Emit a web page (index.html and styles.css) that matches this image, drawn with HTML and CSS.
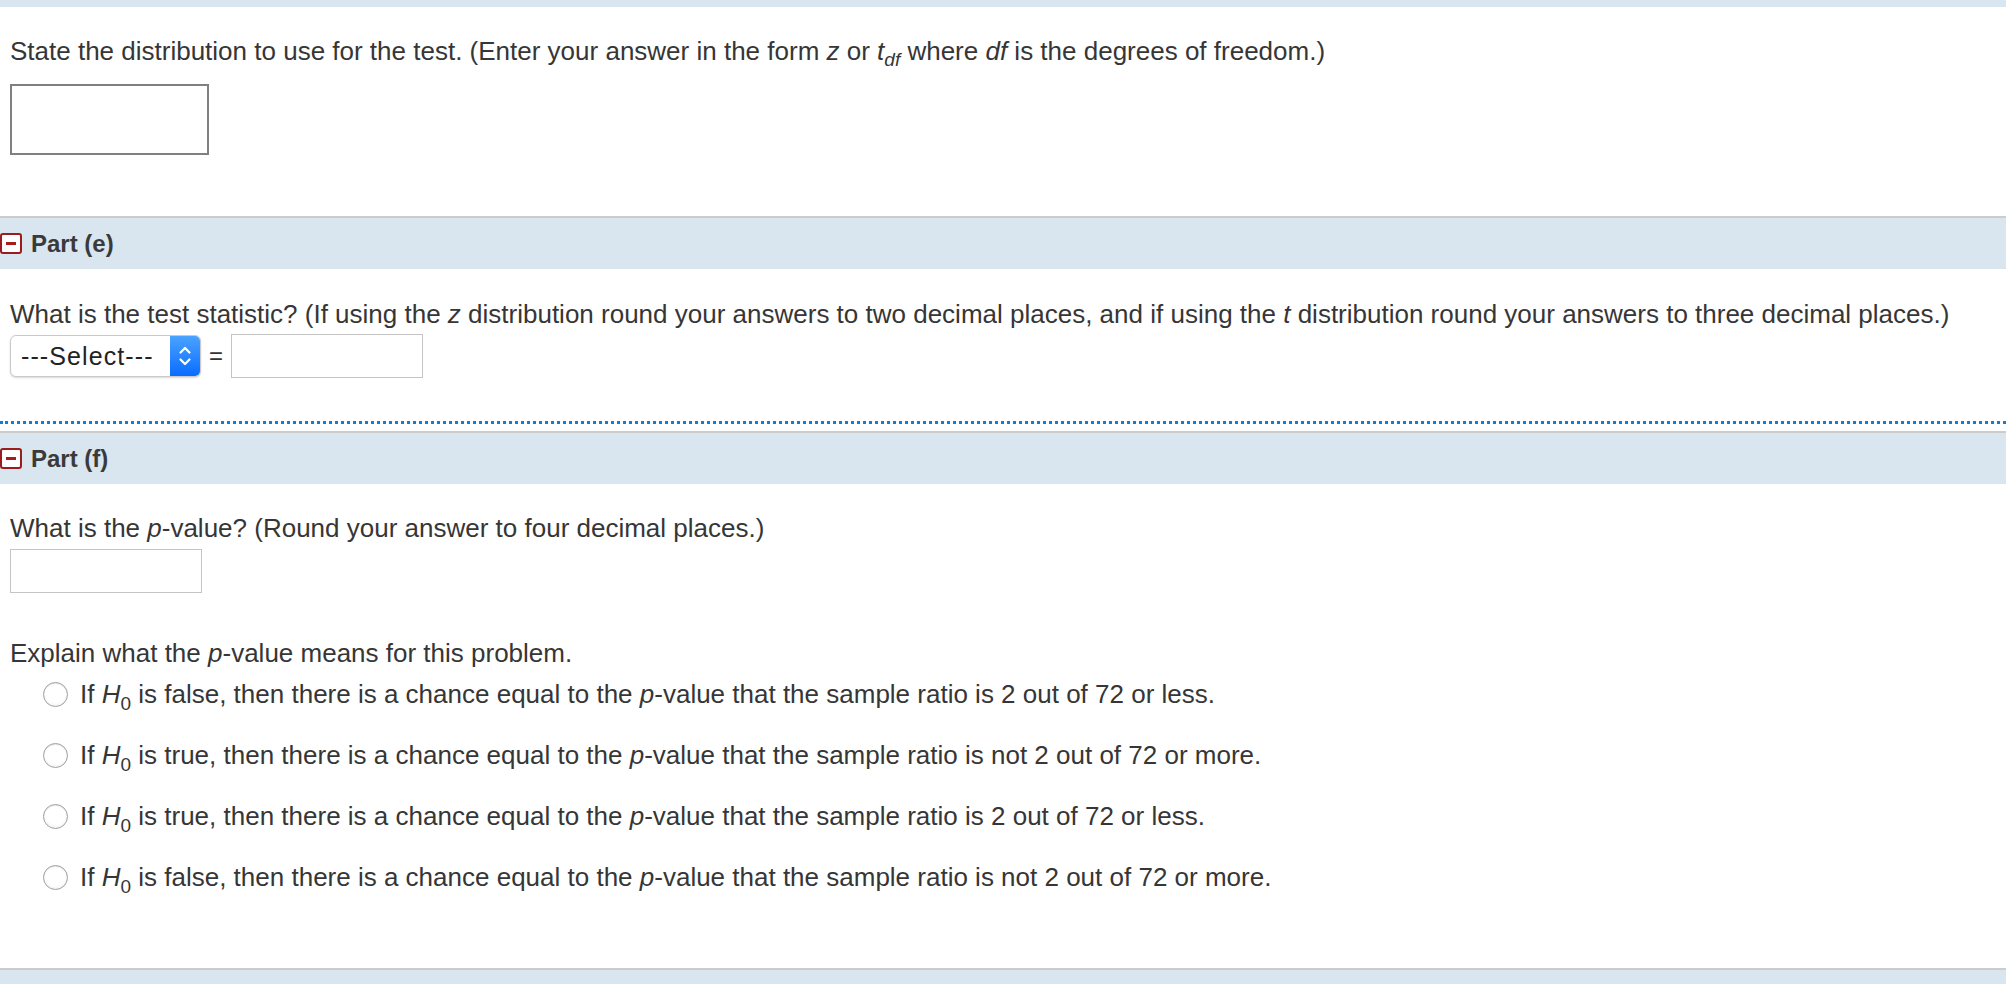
FILE: index.html
```html
<!DOCTYPE html>
<html>
<head>
<meta charset="utf-8">
<link rel="stylesheet" href="styles.css">
</head>
<body>
<div class="topband"></div>

<div class="block block-d">
  <p class="q q-first">State the distribution to use for the test. (Enter your answer in the form <i>z</i> or <i>t</i><sub><i>df</i></sub> where <i>df</i> is the degrees of freedom.)</p>
  <div class="box-big"></div>
</div>

<div class="part-head">
  <span class="toggle"><span class="bar"></span></span>
  <span class="part-title">Part (e)</span>
</div>

<div class="block block-e">
  <p class="q">What is the test statistic? (If using the <i>z</i> distribution round your answers to two decimal places, and if using the <i>t</i> distribution round your answers to three decimal places.)</p>
  <div class="stat-row">
    <div class="select">
      <span class="select-label">---Select---</span>
      <span class="select-btn">
        <svg width="16" height="28" viewBox="0 0 16 28"><path d="M3.5 10.5 L8 6 L12.5 10.5" fill="none" stroke="#fff" stroke-width="2.2" stroke-linecap="round" stroke-linejoin="round"/><path d="M3.5 17.5 L8 22 L12.5 17.5" fill="none" stroke="#fff" stroke-width="2.2" stroke-linecap="round" stroke-linejoin="round"/></svg>
      </span>
    </div>
    <span class="eq">=</span>
    <div class="box-small"></div>
  </div>
</div>
<div class="dotted"></div>

<div class="part-head">
  <span class="toggle"><span class="bar"></span></span>
  <span class="part-title">Part (f)</span>
</div>

<div class="block block-f">
  <p class="q">What is the <i>p</i>-value? (Round your answer to four decimal places.)</p>
  <div class="box-small box-f"></div>
  <p class="q q-explain">Explain what the <i>p</i>-value means for this problem.</p>
  <div class="options">
    <div class="opt"><span class="radio"></span><span>If <i>H</i><sub>0</sub> is false, then there is a chance equal to the <i>p</i>-value that the sample ratio is 2 out of 72 or less.</span></div>
    <div class="opt"><span class="radio"></span><span>If <i>H</i><sub>0</sub> is true, then there is a chance equal to the <i>p</i>-value that the sample ratio is not 2 out of 72 or more.</span></div>
    <div class="opt"><span class="radio"></span><span>If <i>H</i><sub>0</sub> is true, then there is a chance equal to the <i>p</i>-value that the sample ratio is 2 out of 72 or less.</span></div>
    <div class="opt"><span class="radio"></span><span>If <i>H</i><sub>0</sub> is false, then there is a chance equal to the <i>p</i>-value that the sample ratio is not 2 out of 72 or more.</span></div>
  </div>
</div>

<div class="bottom-head"></div>
</body>
</html>
```

FILE: styles.css
```css
html, body {
  margin: 0;
  padding: 0;
  background: #ffffff;
}
body {
  font-family: "Liberation Sans", Arial, Helvetica, sans-serif;
  font-size: 26px;
  color: #363636;
  width: 2006px;
  overflow: hidden;
}
.topband {
  height: 7px;
  background: #d9e5ef;
}
.block {
  padding-left: 10px;
}
.q {
  margin: 0;
  line-height: 28px;
  white-space: nowrap;
}
.q sub {
  font-size: 19px;
  line-height: 0;
  vertical-align: -6px;
}
.block-d {
  padding-top: 30px;
  padding-bottom: 61px;
}
.box-big {
  margin-top: 19px;
  width: 195px;
  height: 67px;
  border: 2px solid #808080;
  background: #fff;
}
.part-head {
  border-top: 2px solid #cccccc;
  background: #d9e5ef;
  height: 51px;
  display: flex;
  align-items: center;
  gap: 9px;
}
.toggle {
  width: 22px;
  height: 21px;
  box-sizing: border-box;
  border: 2px solid #9b1c1c;
  border-radius: 3px;
  background: #ffffff;
  display: flex;
  align-items: center;
  justify-content: center;
}
.toggle .bar {
  width: 10px;
  height: 3px;
  background: #a51d1d;
}
.part-title {
  font-weight: bold;
  font-size: 24px;
  color: #3a3a3a;
}
.block-e {
  padding-top: 31px;
  padding-bottom: 43px;
}
.stat-row {
  margin-top: 6px;
  display: flex;
  align-items: center;
}
.select {
  width: 191px;
  height: 42px;
  box-sizing: border-box;
  border: 1px solid #c9c9c9;
  border-radius: 6px;
  box-shadow: 0 1px 2px rgba(0,0,0,0.15);
  display: flex;
  align-items: stretch;
  overflow: hidden;
  background: #fff;
}
.select-label {
  flex: 1;
  padding-left: 10px;
  display: flex;
  align-items: center;
  font-size: 25px;
  letter-spacing: 1.1px;
  color: #222;
}
.select-btn {
  width: 30px;
  background: linear-gradient(#4aa3ff, #0a6cff);
  display: flex;
  align-items: center;
  justify-content: center;
}
.eq {
  width: 30px;
  text-align: center;
  font-size: 24px;
  color: #333;
}
.box-small {
  width: 190px;
  height: 42px;
  border: 1px solid #c4c4c4;
  background: #fff;
}
.dotted {
  border-top: 3px dotted #0a7fde;
  margin-bottom: 7px;
}
.block-f {
  padding-top: 30px;
  padding-bottom: 77px;
}
.box-f {
  margin-top: 7px;
}
.q-explain {
  margin-top: 46px;
}
.options {
  margin-top: 13px;
  display: flex;
  flex-direction: column;
  gap: 33px;
  padding-left: 33px;
}
.opt {
  display: flex;
  align-items: center;
  gap: 12px;
  line-height: 28px;
  white-space: nowrap;
}
.opt sub {
  font-size: 19px;
  line-height: 0;
  vertical-align: -7px;
}
.radio {
  width: 25px;
  height: 25px;
  box-sizing: border-box;
  border: 1px solid #a0a0a0;
  border-radius: 50%;
  background: radial-gradient(circle at 50% 40%, #ffffff 55%, #e8e8e8 100%);
  box-shadow: inset 0 1px 1px rgba(0,0,0,0.1);
  flex: none;
}
.bottom-head {
  border-top: 2px solid #cccccc;
  background: #d9e5ef;
  height: 30px;
}
```
